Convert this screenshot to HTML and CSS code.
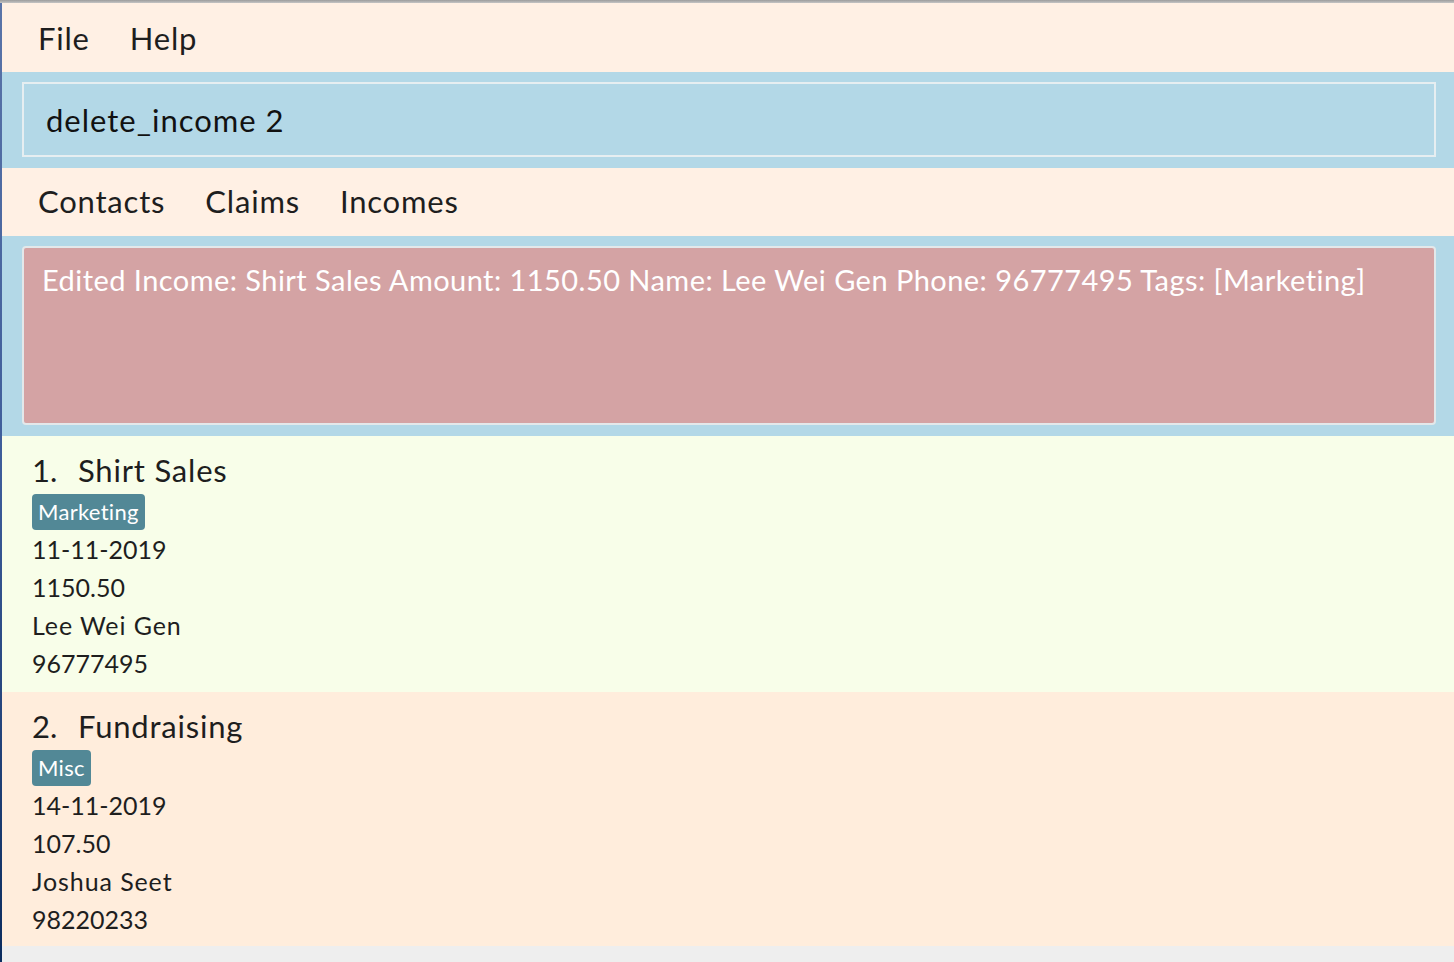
FILE: index.html
```html
<!DOCTYPE html>
<html>
<head>
<meta charset="utf-8">
<link rel="stylesheet" href="styles.css">
</head>
<body>
<div class="titlebar"></div>
<div class="frame">
  <div class="desk-edge"></div>
  <div class="app">
    <nav class="menubar">
      <span class="menu-item">File</span>
      <span class="menu-item">Help</span>
    </nav>
    <section class="command-pane">
      <div class="command-box">delete_income 2</div>
    </section>
    <nav class="tabbar">
      <span class="tab">Contacts</span>
      <span class="tab">Claims</span>
      <span class="tab">Incomes</span>
    </nav>
    <section class="result-pane">
      <div class="result-box">Edited Income: Shirt Sales Amount: 1150.50 Name: Lee Wei Gen Phone: 96777495 Tags: [Marketing]</div>
    </section>
    <ul class="list">
      <li class="card card-odd">
        <div class="card-title"><span class="idx">1.</span>Shirt Sales</div>
        <div class="tags"><span class="tag">Marketing</span></div>
        <div class="field num">11-11-2019</div>
        <div class="field num">1150.50</div>
        <div class="field">Lee Wei Gen</div>
        <div class="field num">96777495</div>
      </li>
      <li class="card card-even">
        <div class="card-title"><span class="idx">2.</span>Fundraising</div>
        <div class="tags"><span class="tag">Misc</span></div>
        <div class="field num">14-11-2019</div>
        <div class="field num">107.50</div>
        <div class="field">Joshua Seet</div>
        <div class="field num">98220233</div>
      </li>
    </ul>
    <div class="list-rest"></div>
  </div>
</div>
</body>
</html>
```

FILE: styles.css
```css
* { box-sizing: border-box; }
html, body {
  margin: 0;
  padding: 0;
  height: 100%;
}
body {
  font-family: Lato, "Noto Sans", sans-serif;
  color: #1e1e1e;
  display: flex;
  flex-direction: column;
  background: #eeeeee;
  overflow: hidden;
}
.titlebar {
  height: 3px;
  background: linear-gradient(#9c9c9c, #c4c4c4);
  flex: none;
}
.frame {
  flex: 1;
  display: flex;
  min-height: 0;
}
.desk-edge {
  width: 2px;
  flex: none;
  background: linear-gradient(#5a74a8, #3d5c99 50%, #0b2c5e);
}
.app {
  flex: 1;
  display: flex;
  flex-direction: column;
  min-width: 0;
}
.menubar, .tabbar {
  background: #fff0e4;
  display: flex;
  align-items: center;
  gap: 40px;
  padding-left: 36px;
  font-size: 31px;
  letter-spacing: 0.8px;
}
.menubar { height: 69px; padding-top: 1px; }
.tabbar { height: 68px; padding-bottom: 2px; }
.command-pane {
  background: #b3d8e7;
  padding: 10px 18px 11px 20px;
}
.command-box {
  height: 75px;
  border: 2px solid #e6eef1;
  padding: 0 22px;
  display: flex;
  align-items: center;
  font-size: 31px;
  letter-spacing: 1px;
  color: #111;
  padding-top: 1px;
}
.result-pane {
  background: #b3d8e7;
  padding: 10px 18px 11px 20px;
}
.result-box {
  height: 179px;
  background: #d4a3a4;
  border: 2px solid #e3e8ea;
  border-radius: 4px;
  color: #ffffff;
  font-size: 29px;
  letter-spacing: 0.45px;
  line-height: 36px;
  padding: 14px 18px;
  white-space: nowrap;
}
.list {
  list-style: none;
  margin: 0;
  padding: 0;
}
.card {
  padding: 14px 0 10px 30px;
}
.card-odd { background: #f8fee9; }
.card-even { background: #ffeddc; padding-bottom: 8px; }
.card-title {
  font-size: 31px;
  line-height: 40px;
  letter-spacing: 0.8px;
  display: flex;
}
.idx { width: 46px; letter-spacing: 0; }
.tags {
  display: flex;
  margin-top: 4px;
}
.tag {
  background: #528896;
  color: #ffffff;
  border-radius: 4px;
  font-size: 22px;
  letter-spacing: 0.3px;
  height: 36px;
  line-height: 36px;
  padding: 0 6px;
}
.field {
  font-size: 25px;
  letter-spacing: 0.9px;
  line-height: 38px;
}
.field.num { letter-spacing: 0; }
.list-rest {
  flex: 1;
  background: #eeeeee;
}
```
